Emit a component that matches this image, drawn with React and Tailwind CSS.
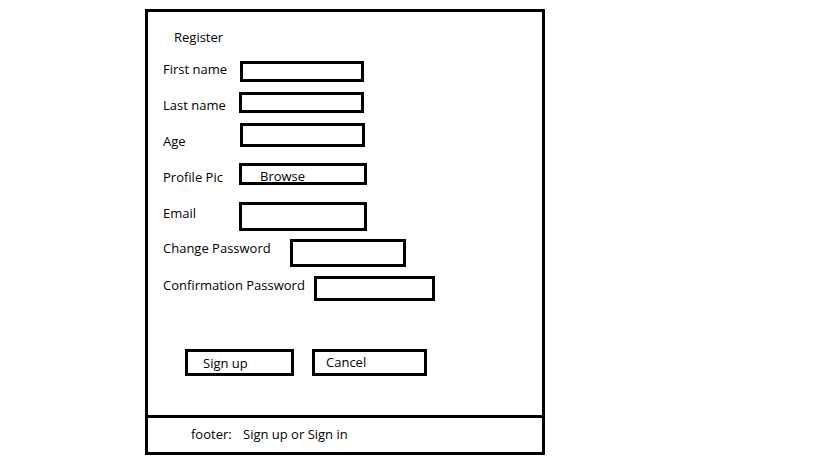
import React from "react";

const rows = [
    { label: "First name", labelW: 77, labelTop: 0, mt: 16, boxW: 124, boxH: 21 },
    { label: "Last name", labelW: 76, labelTop: 5, mt: 10, boxW: 125, boxH: 21 },
    { label: "Age", labelW: 77, labelTop: 10, mt: 10, boxW: 125, boxH: 24 },
    { label: "Profile Pic", labelW: 76, labelTop: 6, mt: 16, boxW: 128, boxH: 22, text: "Browse" },
    { label: "Email", labelW: 76, labelTop: 3, mt: 17, boxW: 128, boxH: 29 },
    { label: "Change Password", labelW: 127, labelTop: 1, mt: 8, boxW: 116, boxH: 28 },
    { label: "Confirmation Password", labelW: 151, labelTop: 1, mt: 9, boxW: 121, boxH: 25 },
];

function FormRow({ row }) {
    return (
        <div className="flex items-start" style={{ marginTop: row.mt, height: row.boxH }}>
            <span className="shrink-0 whitespace-nowrap leading-[16px]" style={{ width: row.labelW, marginTop: row.labelTop }}>
                {row.label}
            </span>
            <div className="shrink-0 border-[3px] border-black" style={{ width: row.boxW, height: row.boxH }}>
                {row.text && <div className="pl-[18px] mt-[2px] leading-[16px]">{row.text}</div>}
            </div>
        </div>
    );
}

export default function App() {
    return (
        <div className="w-full h-[460px] bg-white text-black text-[13px] font-['Open_Sans',sans-serif] pt-[9px]">
            <div className="ml-[145px] w-[400px] h-[446px] border-[3px] border-black flex flex-col">
                <div className="flex-1">
                    <div className="ml-[26px] mt-[17px] leading-[16px]">Register</div>
                    <div className="pl-[15px] flex flex-col">
                        {rows.map((row) => (
                            <FormRow key={row.label} row={row} />
                        ))}
                    </div>
                    <div className="flex mt-[48px] ml-[37px] gap-[18px]">
                        <button className="w-[109px] h-[27px] border-[3px] border-black text-left pl-[15px] pt-[3px] leading-[16px] flex items-start">
                            Sign up
                        </button>
                        <button className="w-[115px] h-[27px] border-[3px] border-black text-left pl-[11px] pt-[2px] leading-[16px] flex items-start">
                            Cancel
                        </button>
                    </div>
                </div>
                <div className="h-[37px] border-t-[3px] border-black flex items-start pl-[43px] pt-[8px] leading-[16px]">
                    <span className="w-[52px]">footer:</span>
                    <span>Sign up or Sign in</span>
                </div>
            </div>
        </div>
    );
}
